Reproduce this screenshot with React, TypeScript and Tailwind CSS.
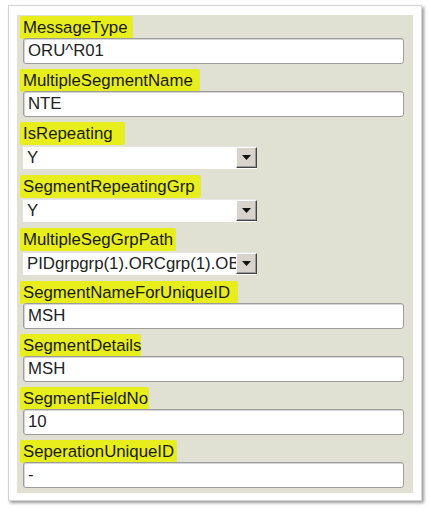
import React from "react";

type Field = {
  label: string;
  value: string;
  kind: "text" | "select";
  pr: number;
};

const fields: Field[] = [
  { label: "MessageType", value: "ORU^R01", kind: "text", pr: 6 },
  { label: "MultipleSegmentName", value: "NTE", kind: "text", pr: 7 },
  { label: "IsRepeating", value: "Y", kind: "select", pr: 12 },
  { label: "SegmentRepeatingGrp", value: "Y", kind: "select", pr: 6 },
  { label: "MultipleSegGrpPath", value: "PIDgrpgrp(1).ORCgrp(1).OBRgrp(1)", kind: "select", pr: 3 },
  { label: "SegmentNameForUniqueID", value: "MSH", kind: "text", pr: 8 },
  { label: "SegmentDetails", value: "MSH", kind: "text", pr: 0 },
  { label: "SegmentFieldNo", value: "10", kind: "text", pr: 1 },
  { label: "SeperationUniqueID", value: "-", kind: "text", pr: 3 },
];

// petit bouton de liste déroulante, style Windows classique
const DropButton = () => (
  <div className="w-[21px] h-[21px] bg-[#d8d4cc] border-t border-l border-t-white border-l-white border-r border-b border-r-[#444] border-b-[#444] flex items-center justify-center shadow-[inset_-1px_-1px_0_#9a9a9a]">
    <svg width="9" height="5" viewBox="0 0 9 5">
      <path d="M0 0h9L4.5 5z" fill="#111" />
    </svg>
  </div>
);

const Row = ({ f }: { f: Field }) => (
  <div className="flex flex-col">
    <div className="h-[20px] flex items-center">
      <span
        className="bg-[#e8ee1c] pl-[3px] -ml-[3px] leading-[23px] rounded-[2px]"
        style={{ paddingRight: f.pr }}
      >
        {f.label}
      </span>
    </div>
    {f.kind === "text" ? (
      <div className="h-[26px] mt-[1px] bg-white border border-[#9c9c9c] rounded-[3px] shadow-[inset_1px_1px_0_#d6d6d6] flex items-center px-[4px] text-[#222] relative z-10">
        {f.value}
      </div>
    ) : (
      <div className="h-[26px] mt-[1px] flex items-center relative z-10">
        <div className="w-[234px] h-[23px] bg-white flex items-center border-t border-[#e6e6e6]">
          <div className="flex-1 overflow-hidden whitespace-nowrap pl-[4px] text-[#222]">{f.value}</div>
          <DropButton />
        </div>
      </div>
    )}
  </div>
);

export default function App() {
  return (
    <div className="w-[430px] h-[512px] bg-white pt-[5px] pl-[8px]" style={{ fontFamily: '"Liberation Sans", Arial, sans-serif' }}>
      <div className="w-[414px] h-[496px] bg-white border border-[#d4d4d4] shadow-[2px_2px_3px_rgba(0,0,0,0.4)] pt-[9px] pl-[8px]">
        <div className="w-[396px] h-[478px] bg-[#e1e1d3] pl-[6px] pr-[9px] pt-[2px] text-[16.8px] text-[#1a1a1a] flex flex-col gap-[6px]">
          {fields.map((f) => (
            <Row key={f.label} f={f} />
          ))}
        </div>
      </div>
    </div>
  );
}
